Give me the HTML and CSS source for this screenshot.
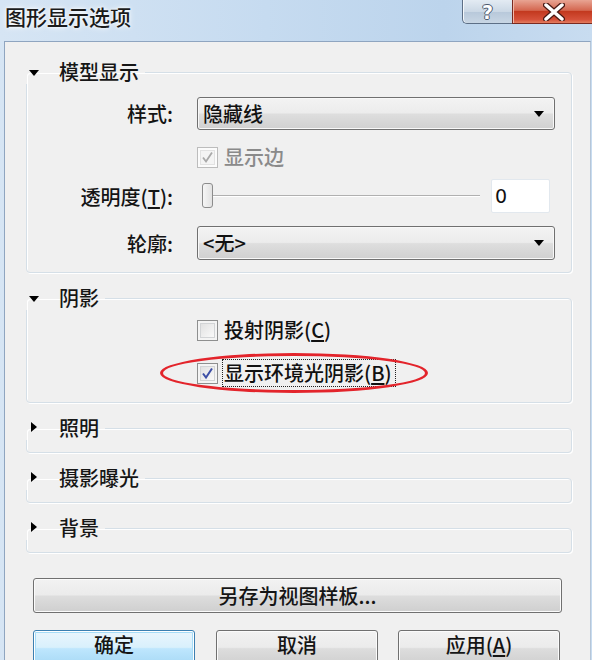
FILE: index.html
```html
<!DOCTYPE html>
<html lang="zh-CN">
<head>
<meta charset="utf-8">
<title>图形显示选项</title>
<link rel="stylesheet" href="styles.css">
</head>
<body>
<div class="window">
  <div class="titlebar">
    <div class="title">图形显示选项</div>
    <div class="caption-btns">
      <div class="cap-btn help"><span class="help-q">?</span></div>
      <div class="cap-btn close">
        <svg width="22" height="18" viewBox="0 0 22 18"><path d="M3 2 L19 16 M19 2 L3 16" stroke="#4a1a14" stroke-width="6" stroke-linecap="round"/><path d="M3 2 L19 16 M19 2 L3 16" stroke="#ffffff" stroke-width="3.5" stroke-linecap="round"/></svg>
      </div>
    </div>
  </div>
  <div class="client">
    <fieldset class="group">
      <legend><span class="tri-box"><span class="tri-down"></span></span>模型显示</legend>
      <div class="rows model-rows">
        <div class="frow r-style">
          <span class="lbl">样式:</span>
          <div class="combo"><span>隐藏线</span><span class="arrow"></span></div>
        </div>
        <div class="frow r-edge">
          <span class="lbl"></span>
          <label class="check disabled"><span class="box"><svg width="15" height="15" viewBox="0 0 15 15"><path d="M3 7.5 L6 11.5 L12 2.5" fill="none" stroke="#a9a9a9" stroke-width="1.8"/></svg></span><span class="ctext">显示边</span></label>
        </div>
        <div class="frow r-trans">
          <span class="lbl">透明度(<u>T</u>):</span>
          <div class="slider-row">
            <div class="slider"><span class="track"></span><span class="thumb"></span></div>
            <div class="numbox">0</div>
          </div>
        </div>
        <div class="frow r-outline">
          <span class="lbl">轮廓:</span>
          <div class="combo"><span>&lt;无&gt;</span><span class="arrow"></span></div>
        </div>
      </div>
    </fieldset>

    <fieldset class="group">
      <legend><span class="tri-box"><span class="tri-down"></span></span>阴影</legend>
      <div class="rows shadow-rows">
        <div class="frow">
          <span class="lbl"></span>
          <label class="check"><span class="box"></span><span class="ctext">投射阴影(<u>C</u>)</span></label>
        </div>
        <div class="frow">
          <span class="lbl"></span>
          <label class="check marked"><span class="box"><svg width="15" height="15" viewBox="0 0 15 15"><path d="M3 7.5 L6 11.5 L12 2.5" fill="none" stroke="#3d4fa6" stroke-width="2"/></svg></span><span class="ctext focus">显示环境光阴影(<u>B</u>)</span><span class="ellipse"></span></label>
        </div>
      </div>
    </fieldset>

    <fieldset class="group collapsed">
      <legend><span class="tri-box"><span class="tri-right"></span></span>照明</legend>
    </fieldset>
    <fieldset class="group collapsed">
      <legend><span class="tri-box"><span class="tri-right"></span></span>摄影曝光</legend>
    </fieldset>
    <fieldset class="group collapsed">
      <legend><span class="tri-box"><span class="tri-right"></span></span>背景</legend>
    </fieldset>

    <div class="btn wide">另存为视图样板...</div>
    <div class="btn-row">
      <div class="btn default">确定</div>
      <div class="btn">取消</div>
      <div class="btn">应用(<u>A</u>)</div>
    </div>
  </div>
</div>
</body>
</html>
```

FILE: styles.css
```css
html, body {
  margin: 0;
  padding: 0;
  width: 592px;
  height: 660px;
  overflow: hidden;
}
body {
  font-family: "Noto Sans CJK SC", "Noto Sans", sans-serif;
  font-size: 20px;
  font-weight: 500;
  color: #111;
  background: linear-gradient(90deg, #d6e5f4 0%, #c6dbf0 45%, #bcd4ec 75%, #c8dcf0 100%);
}
.window {
  display: flex;
  flex-direction: column;
  height: 660px;
}
.titlebar {
  height: 41px;
  display: flex;
  align-items: flex-start;
  flex-shrink: 0;
}
.title {
  margin-top: 3px;
  padding-left: 5px;
  font-size: 21px;
  line-height: 26px;
  color: #1b1b1b;
  text-shadow: 0 0 6px #ffffff, 0 0 3px #ffffff;
}
.caption-btns {
  margin-left: auto;
  display: flex;
  margin-right: -4px;
}
.cap-btn {
  height: 24px;
  display: flex;
  align-items: center;
  justify-content: center;
  box-sizing: border-box;
  border: 1px solid #5d6f86;
  border-top: none;
}
.cap-btn.help {
  width: 50px;
  border-radius: 0 0 0 5px;
  border-right: none;
  background: linear-gradient(#e3ebf3, #cbd8e5 50%, #b7c8da 51%, #c8d6e4);
  box-shadow: inset 1px 0 0 #f4f8fb;
}
.help-q {
  font-family: "DejaVu Sans", sans-serif;
  font-weight: bold;
  font-size: 19px;
  line-height: 20px;
  color: #ffffff;
  text-shadow: 1px 0 0 #4b5a6e, -1px 0 0 #4b5a6e, 0 1px 0 #4b5a6e, 0 -1px 0 #4b5a6e;
}
.cap-btn.close {
  width: 84px;
  border-color: #7a2a20;
  background: linear-gradient(#e8a493, #d46750 45%, #c3391f 50%, #d5513a 85%, #e37d5f);
  box-shadow: inset 1px 0 0 #f0b9aa;
}
.client {
  flex: 1;
  margin-left: 4px;
  margin-right: 1px;
  border-top: 1px solid #8fa5c0;
  border-left: 1px solid #8fa5c0;
  border-right: 1px solid #b6c6d8;
  background: #f0f0f0;
  padding: 18px 18px 0 21px;
  display: flex;
  flex-direction: column;
}
.group {
  margin: 0;
  padding: 0 16px 12px 0;
  min-width: 0;
  border: 1px solid #d5dfe7;
  border-radius: 4px;
  box-shadow: inset 1px 1px 0 #ffffff, 1px 1px 0 #ffffff;
}
.group + .group {
  margin-top: 13px;
}
.group legend {
  padding: 0 6px 0 3px;
  margin-left: -1px;
  height: 24px;
  line-height: 24px;
  color: #161616;
  white-space: nowrap;
}
.tri-box {
  display: inline-block;
  width: 30px;
  height: 24px;
  vertical-align: top;
  position: relative;
}
.tri-down {
  position: absolute;
  left: 0;
  top: 10px;
  width: 0;
  height: 0;
  border-left: 5px solid transparent;
  border-right: 5px solid transparent;
  border-top: 6px solid #000;
}
.tri-right {
  position: absolute;
  left: 2px;
  top: 6px;
  width: 0;
  height: 0;
  border-top: 5px solid transparent;
  border-bottom: 5px solid transparent;
  border-left: 6px solid #000;
}
.rows {
  display: flex;
  flex-direction: column;
}
.frow {
  display: flex;
  align-items: center;
  height: 34px;
}
.model-rows .r-style { margin-top: 13px; height: 33px; }
.model-rows .r-edge { margin-top: 10px; }
.model-rows .r-trans { margin-top: 5px; }
.model-rows .r-outline { margin-top: 13px; }
.shadow-rows { margin-top: 3px; gap: 9px; }
.lbl {
  flex: 0 0 146px;
  margin-right: 24px;
  text-align: right;
  line-height: 33px;
  white-space: nowrap;
  color: #141414;
}
u { text-decoration: underline; text-underline-offset: 2px; }
.combo {
  flex: 1;
  box-sizing: border-box;
  height: 33px;
  border: 1px solid #707070;
  border-radius: 3px;
  background: linear-gradient(#f3f3f3 0%, #ececec 48%, #dedede 52%, #d0d0d0 100%);
  box-shadow: inset 0 0 0 1px #f8f8f8;
  display: flex;
  align-items: center;
  padding: 0 10px 0 5px;
  line-height: 24px;
}
.r-outline .combo { height: 34px; }
.combo .arrow {
  margin-left: auto;
  width: 0;
  height: 0;
  border-left: 5px solid transparent;
  border-right: 5px solid transparent;
  border-top: 6px solid #000;
}
.check {
  display: inline-flex;
  align-items: center;
  gap: 6px;
  position: relative;
}
.check .box {
  box-sizing: border-box;
  width: 21px;
  height: 21px;
  border: 1px solid #8e8f8f;
  background: linear-gradient(135deg, #dcdcdc, #ffffff);
  box-shadow: inset 0 0 0 2px #f4f4f4, inset 0 0 0 3px #d2d4d6;
  display: flex;
  align-items: center;
  justify-content: center;
}
.check.disabled .box {
  border-color: #bcbcbc;
  background: #f4f4f4;
  box-shadow: inset 0 0 0 2px #fbfbfb, inset 0 0 0 3px #e2e2e2;
}
.check.disabled .ctext { color: #8a8a8a; }
.ctext {
  line-height: 24px;
  white-space: nowrap;
}
.ctext.focus {
  outline: 1px dotted #222;
  outline-offset: 1px;
  padding-right: 2px;
}
.ellipse {
  position: absolute;
  left: -37px;
  top: -8px;
  width: 268px;
  height: 40px;
  box-sizing: border-box;
  border: 3px solid #e3242b;
  border-radius: 50%;
}
.slider-row {
  flex: 1;
  display: flex;
  align-items: center;
  margin-right: 5px;
}
.slider {
  flex: 1;
  position: relative;
  height: 34px;
  margin-left: 5px;
  margin-right: 11px;
}
.track {
  position: absolute;
  left: 6px;
  right: 0;
  top: 16px;
  height: 1px;
  background: #b0b0b0;
  box-shadow: 0 1px 0 #ffffff;
}
.thumb {
  position: absolute;
  left: 0;
  top: 4px;
  width: 11px;
  height: 25px;
  box-sizing: border-box;
  border: 1px solid #8c8c8c;
  border-radius: 3px;
  background: linear-gradient(90deg, #f6f6f6, #e2e2e2);
}
.numbox {
  box-sizing: border-box;
  width: 59px;
  height: 34px;
  background: #ffffff;
  border: 1px solid #e2e8ee;
  border-radius: 2px;
  padding-left: 3px;
  line-height: 32px;
  font-size: 19px;
  font-weight: normal;
  font-family: "DejaVu Sans", sans-serif;
}
.btn {
  box-sizing: border-box;
  height: 35px;
  border: 1px solid #707070;
  border-radius: 3px;
  background: linear-gradient(#f2f2f2 0%, #ebebeb 48%, #dddddd 52%, #cfcfcf 100%);
  box-shadow: inset 0 0 0 1px #fbfbfb;
  display: flex;
  align-items: center;
  justify-content: center;
  line-height: 24px;
  color: #151515;
}
.btn.wide {
  margin: 25px 10px 0 7px;
}
.btn-row {
  display: flex;
  gap: 20px;
  margin: 17px 0 0 7px;
}
.btn-row .btn {
  width: 162px;
  height: 36px;
  flex-shrink: 0;
  align-items: flex-start;
  padding-top: 3px;
  line-height: 21px;
}
.btn-row .btn:nth-child(2) { margin-left: 1px; }
.btn.default {
  border-color: #3c7fb1;
  background: linear-gradient(#eaf6fd 0%, #d9f0fc 48%, #bee6fd 52%, #a7d9f5 100%);
  box-shadow: inset 0 0 0 1px #ffffff, inset 0 0 0 2px #a6dcf7;
}
```
